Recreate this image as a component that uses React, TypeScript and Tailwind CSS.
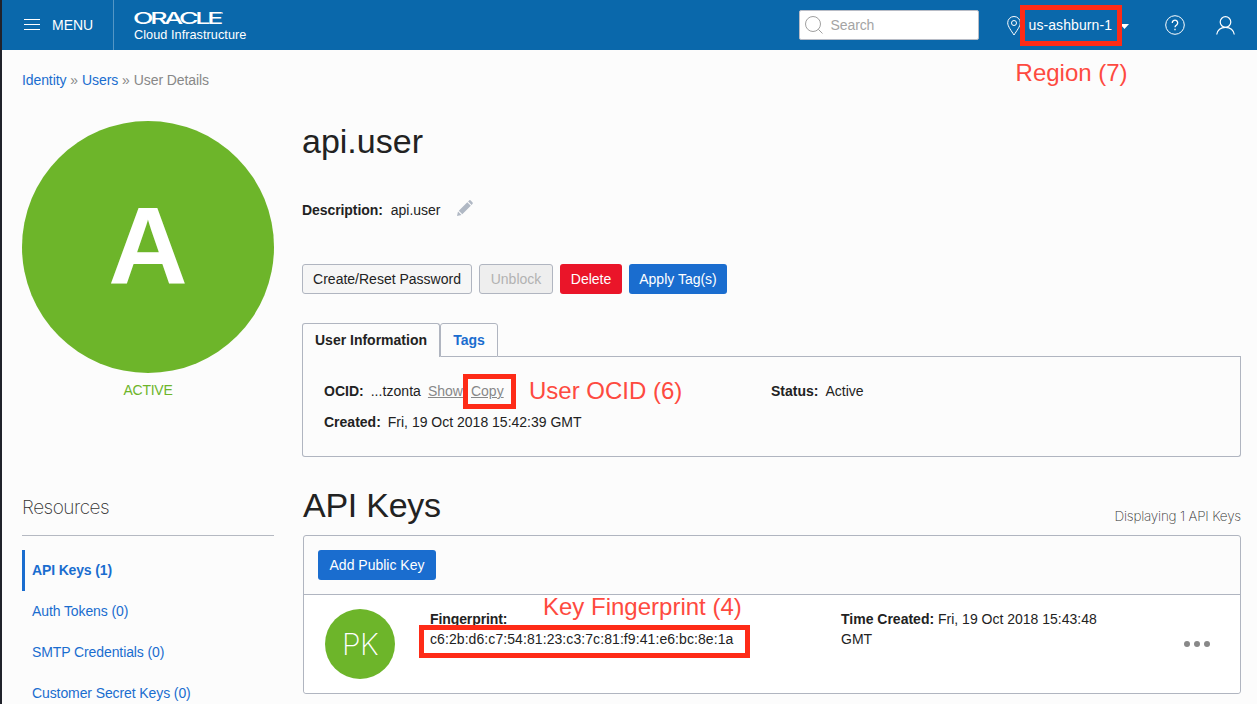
import type { ReactNode } from "react";

const HEADER_LINK = "text-[#1a6dcf]";

function Button({ className, children }: { className: string; children: ReactNode }) {
  return (
    <button className={`flex h-[30px] items-center justify-center rounded-[3px] text-sm whitespace-nowrap ${className}`}>
      {children}
    </button>
  );
}

function Header() {
  return (
    <header className="flex h-[50px] bg-[#0a68ab] text-white">
      <div className="flex w-28 items-center border-r border-[#5496c5] pl-[22px]">
        <svg width="16" height="12" viewBox="0 0 16 12" stroke="#fff" strokeWidth="1">
          <path d="M0 .5H16M0 5.5H16M0 10.5H16" />
        </svg>
        <span className="ml-3 text-sm">MENU</span>
      </div>
      <div className="flex flex-col pt-[7px] pl-[19px]">
        <svg width="96" height="22" viewBox="0 0 96 22" fill="#fff" fontFamily="Inter, sans-serif">
          <text x="0" y="16.500" fontSize="15.500" fontWeight="500" letterSpacing="-1.900" textLength="87" lengthAdjust="spacingAndGlyphs">ORACLE</text>
          <circle cx="89.500" cy="6" r=".6" />
        </svg>
        <span className="-mt-0.5 ml-px text-[12.7px] leading-[17px] tracking-[0.05px]">Cloud Infrastructure</span>
      </div>
      <div className="mr-[21px] ml-auto flex items-center">
        <div className="flex h-[30px] w-[180px] items-center rounded-[2px] border border-[#b8bcc6] bg-white pl-[5px] text-sm text-[#a4a4a4]">
          <svg width="18" height="18" viewBox="0 0 18 18" fill="none" stroke="#a0a0a0">
            <circle cx="8" cy="8" r="7.5" />
            <path d="M13.3 13.3L17.5 17.5" />
          </svg>
          <span className="ml-2 tracking-[-0.1px]">Search</span>
        </div>
        <svg className="mt-0.5 ml-[28px]" width="14" height="20" viewBox="0 0 14 20" fill="none" stroke="#fff">
          <path d="M7 19C4.5 15 .7 10.500 .7 6.800A6.300 6.300 0 0 1 13.300 6.800C13.300 10.500 9.500 15 7 19Z" />
          <circle cx="7" cy="7" r="2.500" />
        </svg>
        <div className="relative ml-2 text-sm tracking-[0.08px]">
          us-ashburn-1
          <div className="absolute -top-[10px] -left-[9px] h-[41px] w-[102px] border-5 border-[#fe2b17]" />
          <div className="absolute top-[42px] -left-[13px] text-2xl tracking-normal whitespace-nowrap text-[#fe4a40]">Region (7)</div>
        </div>
        <svg className="mt-[3px] ml-[8px]" width="9" height="5" viewBox="0 0 9 5" fill="#fff">
          <path d="M0 0H9L4.500 5Z" />
        </svg>
        <svg className="ml-[36px]" width="20" height="20" viewBox="0 0 20 20" fill="none" stroke="#fff">
          <circle cx="10" cy="10" r="9.300" />
          <path strokeWidth="1.300" d="M7.300 8A2.700 2.700 0 1 1 11.700 9.900C10.500 10.700 10 11 10 12.300M10 13.800V15.200" />
        </svg>
        <svg className="ml-[31px]" width="20" height="19" viewBox="0 0 20 19" fill="none" stroke="#fff" strokeWidth="1.200">
          <circle cx="9.500" cy="6" r="5.300" />
          <path d="M.7 18.500C1.500 14 4.500 11.300 9.500 11.300S17.500 14 18.300 18.500" />
        </svg>
      </div>
    </header>
  );
}

function Sidebar() {
  return (
    <aside className="w-[252px]">
      <div className="flex size-[252px] items-center justify-center rounded-full bg-[#6db52a] pb-1 text-[110px] leading-none font-bold text-white">
        <span>A</span>
      </div>
      <div className="mt-[7px] text-center text-sm tracking-[-0.25px] text-[#6db52a]">ACTIVE</div>
      <h2 className="mt-[98px] h-[38px] border-b border-[#b5b9c2] font-[Inter] text-[19px] leading-5 font-extralight tracking-[-0.5px] text-[#333]">
        Resources
      </h2>
      <nav className="mt-3.5 flex flex-col text-sm tracking-[-0.1px] text-[#1a6dcf]">
        <a className="flex h-[41px] items-center border-l-3 border-[#1a6dcf] pb-px pl-[7px] font-bold tracking-[-0.15px]">API Keys (1)</a>
        <a className="flex h-[41px] items-center pb-px pl-2.5">Auth Tokens (0)</a>
        <a className="flex h-[41px] items-center pb-px pl-2.5">SMTP Credentials (0)</a>
        <a className="flex h-[41px] items-center pb-px pl-2.5">Customer Secret Keys (0)</a>
      </nav>
    </aside>
  );
}

function UserInfo() {
  return (
    <section className="mt-[29px]">
      <div className="flex h-[34px] text-sm font-bold">
        <div className="flex w-[138px] items-center justify-center rounded-t-[3px] border border-b-0 border-[#b0b5c0] pb-px">User Information</div>
        <div className="flex w-[58px] items-center justify-center rounded-t-[3px] border border-[#b0b5c0] text-[#1a6dcf]">Tags</div>
        <div className="flex-1 border-b border-[#b0b5c0]" />
      </div>
      <div className="flex h-[100px] rounded-b-[3px] border border-t-0 border-[#b0b5c0] pt-[24px] pl-[21px] text-sm">
        <div className="w-[447px]">
          <div className="flex">
            <b>OCID:</b>
            <span className="ml-[7px] tracking-[0.05px]">...tzonta</span>
            <a className="ml-[7px] text-[#888] underline">Show</a>
            <div className="relative ml-2">
              <a className="text-[#888] underline">Copy</a>
              <div className="absolute -top-[7px] -left-2 h-[35px] w-[53px] border-5 border-[#fe2b17]" />
              <div className="absolute -top-[6px] left-[58px] text-2xl whitespace-nowrap text-[#fe4a40]">User OCID (6)</div>
            </div>
          </div>
          <div className="mt-[11px]">
            <b>Created:</b>
            <span className="ml-[7px]">Fri, 19 Oct 2018 15:42:39 GMT</span>
          </div>
        </div>
        <div>
          <b>Status:</b>
          <span className="ml-[7px]">Active</span>
        </div>
      </div>
    </section>
  );
}

function ApiKeys() {
  return (
    <section className="mt-7">
      <div className="flex h-[50px] justify-between">
        <h2 className="ml-px text-[34px] leading-10 tracking-[-0.25px]">API Keys</h2>
        <span className="mt-[21px] font-[Inter] text-[13.5px] font-extralight tracking-[-0.2px] text-[#333]">Displaying 1 API Keys</span>
      </div>
      <div className="ml-px h-[159px] rounded-[3px] border border-[#b0b5c0]">
        <div className="h-[59px] border-b border-[#b0b5c0] p-3.5">
          <Button className="w-[118px] bg-[#1a6dcf] text-white">Add Public Key</Button>
        </div>
        <div className="flex h-[98px] rounded-b-[3px] bg-white pt-[14px] pl-[21px] text-sm leading-5">
          <div className="flex size-[70px] items-center justify-center rounded-full bg-[#6db52a] font-[Inter] text-[30px] font-extralight tracking-[-0.5px] text-white">PK</div>
          <div className="ml-[35px] w-[411px]">
            <b className="tracking-[-0.1px]">Fingerprint:</b>
            <div className="relative">
              <span className="tracking-[0.08px]">c6:2b:d6:c7:54:81:23:c3:7c:81:f9:41:e6:bc:8e:1a</span>
              <div className="absolute -top-1 -left-[11px] h-[33px] w-[331px] border-5 border-[#fe2b17]" />
              <div className="absolute -top-[38px] left-[113px] text-2xl whitespace-nowrap text-[#fe4a40]">Key Fingerprint (4)</div>
            </div>
          </div>
          <div className="w-[275px]">
            <b>Time Created:</b> Fri, 19 Oct 2018 15:43:48 GMT
          </div>
          <svg className="mt-8 ml-[68px]" width="26" height="6" viewBox="0 0 26 6" fill="#888">
            <circle cx="3" cy="3" r="3" />
            <circle cx="13" cy="3" r="3" />
            <circle cx="23" cy="3" r="3" />
          </svg>
        </div>
      </div>
    </section>
  );
}

export default function App() {
  return (
    <div className="h-[704px] w-[1257px] overflow-hidden border-l-2 border-[#20222b] bg-[#fcfcfc] font-['Liberation_Sans',Arial,sans-serif] text-[#222]">
      <Header />
      <div className="mt-5 ml-5 flex h-5 gap-1 text-sm tracking-[-0.1px] text-[#888]">
        <a className={HEADER_LINK}>Identity</a>»<a className={HEADER_LINK}>Users</a>»<span>User Details</span>
      </div>
      <div className="mt-[31px] mr-4 ml-5 flex gap-7">
        <Sidebar />
        <main className="flex-1">
          <h1 className="text-[34px] leading-10">api.user</h1>
          <div className="mt-[39px] flex h-5 items-center text-sm">
            <b className="tracking-[-0.08px]">Description:</b>
            <span className="ml-2">api.user</span>
            <svg className="-mt-1 ml-4" width="16" height="16" viewBox="0 0 16 16" fill="#b0b8c4">
              <path d="M0 16L1 11.500L4.500 15ZM1.800 10.700L10.300 2.200L13.800 5.700L5.300 14.200ZM11.100 1.400L12.300.3Q12.900-.2 13.500.3L15.600 2.400Q16.100 3 15.600 3.700L14.600 4.900Z" />
            </svg>
          </div>
          <div className="mt-11 flex gap-[7px]">
            <Button className="w-[170px] border border-[#b0b5c0] bg-[#f6f6f6]">Create/Reset Password</Button>
            <Button className="w-[74px] border border-[#b0b5c0] bg-[#eee] text-[#b2b2b2]">Unblock</Button>
            <Button className="w-[62px] bg-[#ea1529] text-white">Delete</Button>
            <Button className="w-[98px] bg-[#1a6dcf] text-white">Apply Tag(s)</Button>
          </div>
          <UserInfo />
          <ApiKeys />
        </main>
      </div>
    </div>
  );
}
